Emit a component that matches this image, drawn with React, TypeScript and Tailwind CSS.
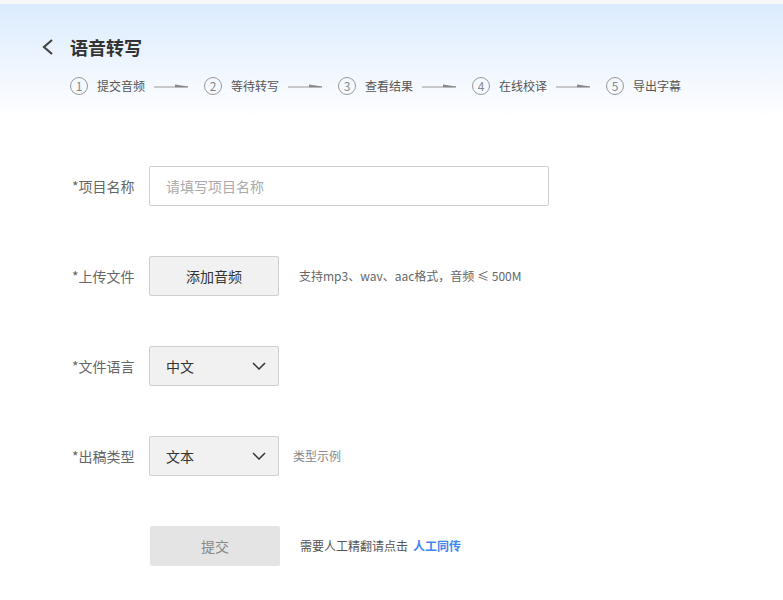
import React from "react";

const font = { fontFamily: '"Microsoft YaHei", "Noto Sans CJK SC", "Noto Sans", sans-serif' };

function Arrow() {
  return (
    <svg width="34" height="6" viewBox="0 0 34 6" className="ml-[9px] mr-[16px]">
      <line x1="0" y1="4" x2="34" y2="4" stroke="#9a9a9a" strokeWidth="1.2" />
      <polygon points="21,1.4 34,3.6 34,4.3 21,4.3" fill="#888" />
    </svg>
  );
}

function Chevron() {
  return (
    <svg width="14" height="8" viewBox="0 0 14 8">
      <polyline points="1,1 7,7 13,1" fill="none" stroke="#333" strokeWidth="1.5" />
    </svg>
  );
}

const steps = ["提交音频", "等待转写", "查看结果", "在线校译", "导出字幕"];

export default function App() {
  return (
    <div className="w-[783px] h-[600px] bg-white overflow-hidden" style={font}>
      <div className="h-[4px] bg-[#f8f8f8]" />
      <div className="h-[114px] bg-gradient-to-b from-[#dbebfd] to-white pl-[41px] pt-[31px]">
        <div className="flex items-center h-[24px]">
          <svg width="14" height="18" viewBox="0 0 14 18" className="mr-[15px]">
            <polyline points="11,2 3,9 11,16" fill="none" stroke="#444" strokeWidth="2.2" />
          </svg>
          <span className="text-[18px] font-bold text-[#333] leading-none">语音转写</span>
        </div>
        <div className="flex items-center mt-[17px] ml-[29px] h-[20px]">
          {steps.map((s, i) => (
            <div key={s} className="flex items-center">
              <span className="w-[18px] h-[18px] rounded-full border border-[#999] text-[12px] text-[#888] flex items-center justify-center leading-none">
                {i + 1}
              </span>
              <span className="ml-[9px] text-[12px] text-[#555]">{s}</span>
              {i < steps.length - 1 && <Arrow />}
            </div>
          ))}
        </div>
      </div>

      <div className="pl-[72px] pt-[48px] flex flex-col gap-[50px] text-[14px]">
        <div className="flex items-center h-[40px]">
          <span className="w-[77px] text-[#666]">*项目名称</span>
          <div className="w-[400px] h-[40px] border border-[#cfcfcf] rounded-[2px] flex items-center pl-[16px] text-[#aaa]">
            请填写项目名称
          </div>
        </div>
        <div className="flex items-center h-[40px]">
          <span className="w-[77px] text-[#666]">*上传文件</span>
          <div className="w-[130px] h-[40px] border border-[#cfcfcf] rounded-[2px] bg-[#f1f1f1] flex items-center justify-center text-[#333]">
            添加音频
          </div>
          <span className="ml-[20px] text-[12px] text-[#666]">支持mp3、wav、aac格式，音频 ≤ 500M</span>
        </div>
        <div className="flex items-center h-[40px]">
          <span className="w-[77px] text-[#666]">*文件语言</span>
          <div className="w-[130px] h-[40px] border border-[#cfcfcf] rounded-[2px] bg-[#f1f1f1] flex items-center justify-between pl-[16px] pr-[12px] text-[#333]">
            中文
            <Chevron />
          </div>
        </div>
        <div className="flex items-center h-[40px]">
          <span className="w-[77px] text-[#666]">*出稿类型</span>
          <div className="w-[130px] h-[40px] border border-[#cfcfcf] rounded-[2px] bg-[#f1f1f1] flex items-center justify-between pl-[16px] pr-[12px] text-[#333]">
            文本
            <Chevron />
          </div>
          <span className="ml-[14px] text-[12px] text-[#888]">类型示例</span>
        </div>
        <div className="flex items-center h-[40px]">
          <span className="w-[78px]" />
          <div className="w-[130px] h-[40px] rounded-[2px] bg-[#e4e4e4] flex items-center justify-center text-[#888]">
            提交
          </div>
          <span className="ml-[20px] text-[12px] text-[#555]">需要人工精翻请点击</span>
          <span className="ml-[5px] text-[12px] text-[#3f86f0] font-bold">人工同传</span>
        </div>
      </div>
    </div>
  );
}
